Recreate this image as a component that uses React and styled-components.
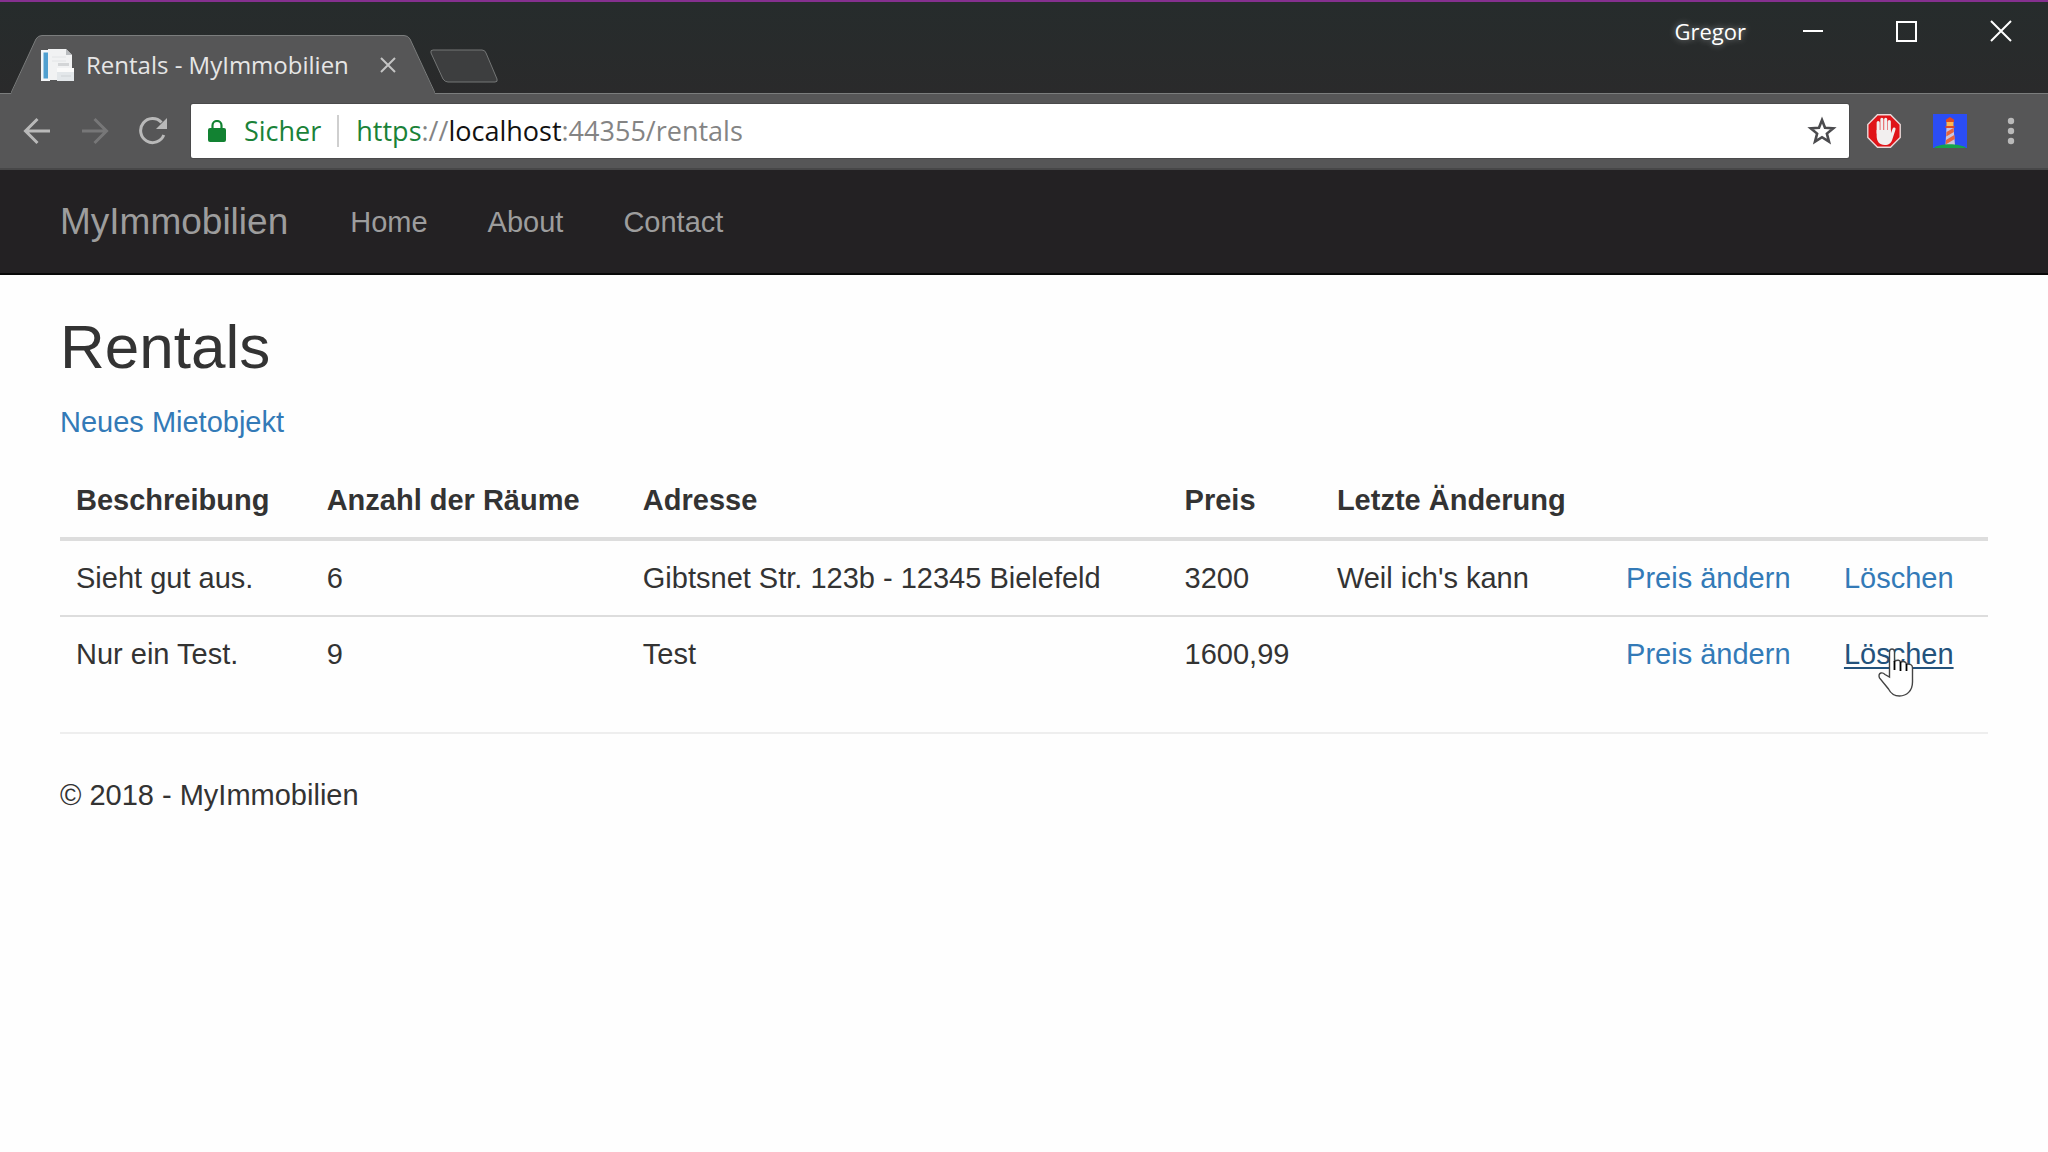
import React from "react";
import styled, { createGlobalStyle } from "styled-components";

const uiFont = `"Open Sans", "Noto Sans", sans-serif`;
const pageFont = `"Liberation Sans", Arial, sans-serif`;

const GlobalStyle = createGlobalStyle`
  * { box-sizing: border-box; }
  html { background: #fefefe; }
  body { margin: 0; font-family: ${pageFont}; font-size: 29px; line-height: 42px; color: #333; }
`;

const PlainButton = styled.button`
  display: flex;
  align-items: center;
  justify-content: center;
  flex: none;
  width: ${(p) => p.$width}px;
  height: ${(p) => p.$height}px;
  padding: 0;
  border: 0;
  background: none;
  color: #b9b9b9;
  svg { display: block; }
`;

const TitleBar = styled.header`
  display: flex;
  justify-content: space-between;
  align-items: flex-start;
  height: 94px;
  border-top: 2px solid #85308f;
  background: linear-gradient(#262c2c, #2a2a2b);
  box-shadow: inset 0 -1px #7b7d7d;
`;

const TabStrip = styled.nav`
  display: flex;
  padding-top: 33px;
`;

const Tab = styled.div`
  display: grid;
  width: 424px;
  height: 59px;
  margin-left: 11px;
  > * { grid-area: 1 / 1; }
`;

const TabContent = styled.div`
  display: flex;
  align-items: center;
  padding: 0 39px 0 29px;
`;

const TabTitle = styled.span`
  flex: 1;
  padding-left: 12px;
  font: 24px/34px ${uiFont};
  color: #e6e6e6;
  white-space: nowrap;
`;

const NewTab = styled(PlainButton)`
  margin: 14px 0 0 -6px;
`;

const WindowControls = styled.div`
  display: flex;
  align-items: center;
  height: 58px;
`;

const Profile = styled.span`
  padding-right: 20px;
  font: 22px/30px ${uiFont};
  color: #fff;
  text-shadow: 0 0 6px rgba(255, 255, 255, 0.5);
`;

const Toolbar = styled.div`
  display: flex;
  align-items: center;
  height: 76px;
  padding: 0 17px 0 8px;
  background: #565657;
  border-bottom: 2px solid #474748;
`;

const AddressBar = styled.div`
  display: flex;
  flex: 1;
  align-items: center;
  height: 54px;
  margin: 0 10px;
  padding: 0 12px 0 17px;
  border-radius: 2px;
  background: #fff;
  box-shadow: 0 0 0 1px #4a4a4b;
  font: 27px/36px ${uiFont};
  color: #848484;
`;

const Secure = styled.span`
  margin-left: 18px;
  padding-right: 16px;
  border-right: 2px solid #cfcfcf;
  line-height: 32px;
  color: #1a8238;
`;

const Url = styled.span`
  flex: 1;
  padding-left: 17px;
  em { font-style: normal; color: #1a8238; }
  b { font-weight: 400; color: #111; }
`;

const NavBar = styled.nav`
  display: flex;
  align-items: center;
  height: 105px;
  padding: 0 60px;
  background: #232123;
  border-bottom: 2px solid #080808;
`;

const Brand = styled.a`
  padding-right: 32px;
  font-size: 37px;
  color: #9d9d9d;
  text-decoration: none;
`;

const NavLink = styled.a`
  padding: 0 30px;
  color: #9d9d9d;
  text-decoration: none;
`;

const Main = styled.main`
  padding: 38px 60px 0;
`;

const Heading = styled.h2`
  margin: 0 0 20px;
  font-size: 62px;
  font-weight: 400;
  line-height: 68px;
`;

const Paragraph = styled.p`
  margin: 0 0 20px;
`;

const Link = styled.a`
  color: ${(p) => (p.$hovered ? "#23527c" : "#337ab7")};
  text-decoration: ${(p) => (p.$hovered ? "underline" : "none")};
  text-decoration-thickness: 2px;
  text-underline-offset: 3px;
`;

const Table = styled.table`
  width: 100%;
  margin-bottom: 41px;
  border-collapse: collapse;
  table-layout: fixed;
  white-space: nowrap;
  th, td { padding: 16px; text-align: left; }
  th { border-bottom: 4px solid #ddd; }
  tr + tr td { border-top: 2px solid #ddd; }
`;

const Col = styled.col`
  width: ${(p) => p.$share}%;
`;

const LinkWrap = styled.span`
  position: relative;
`;

const Cursor = styled.svg`
  position: absolute;
  left: 34px;
  top: 10px;
`;

const Rule = styled.hr`
  margin: 0 0 40px;
  border: 0;
  border-top: 2px solid #eee;
`;

const Favicon = () => (
  <svg width="34" height="34" viewBox="0 0 34 34">
    <path d="M1 2h9v31H1z" fill="#f4f6f8" />
    <path d="M3.500 4.500H9v26H3.500z" fill="#4f9fd0" />
    <path d="M8 1h18l6 6v25H8z" fill="#f1f2f3" />
    <path d="M26 1v6h6z" fill="#b9bcbf" />
    <path d="M12 9h14M12 13h14" stroke="#e2e4e6" />
    <path d="M18 15h11v3H18z" fill="#d3d5d7" />
    <path d="M17 20h17v13H17z" fill="#e3e7ea" />
    <path d="M17 20h17v4H17z" fill="#fafafa" />
    <path d="M21 28h10" stroke="#cfd3d6" />
  </svg>
);

const HandSign = () => (
  <svg width="34" height="34" viewBox="0 0 34 34">
    <path d="M10.500.8h13L33.200 10.500v13L23.500 33.200h-13L.8 23.500v-13z" fill="#e01419" stroke="#e8dada" strokeWidth="1.400" />
    <path d="M11.200 19V8.500M14.900 17V5.200M18.700 17V5.200M22.300 19V7.500" fill="none" stroke="#f2efef" strokeWidth="3.100" strokeLinecap="round" />
    <path d="M9.650 16h14.200v3.500l1.600-4.500q.8-2 2.600-1.200.8.600.4 2l-3 9.200c-1.200 4-3.500 6-7.700 6-5.500 0-8.100-4-8.100-9z" fill="#f2efef" />
  </svg>
);

const Lighthouse = () => (
  <svg width="34" height="34" viewBox="0 0 34 34">
    <path d="M0 0h34v34H0z" fill="#2b4df5" />
    <path d="M13.500 13h7l1.500 18h-9.500z" fill="#c9c4dd" />
    <path d="M13.500 18l7-4 .4 4-7.700 4.500zM13 26l8.300-5 .5 4-9.200 5.500z" fill="#e8643c" />
    <path d="M12.500 12h9v2h-9zM13 5.500L17 3l4 2.500V8h-8z" fill="#dd4a26" />
    <path d="M13.500 8h7v4h-7z" fill="#ffb84d" />
    <path d="M1 34c5-5 26-5 32 0z" fill="#16a34c" />
  </svg>
);

const rentals = [
  { id: 1, text: "Sieht gut aus.", rooms: "6", address: "Gibtsnet Str. 123b - 12345 Bielefeld", price: "3200", change: "Weil ich's kann" },
  { id: 2, text: "Nur ein Test.", rooms: "9", address: "Test", price: "1600,99", change: "", hovered: true },
];

const shares = [13, 16.4, 28.1, 7.9, 15, 11.3, 8.3];
const headings = ["Beschreibung", "Anzahl der Räume", "Adresse", "Preis", "Letzte Änderung"];

export default function App() {
  return (
    <>
      <GlobalStyle />
      <TitleBar>
        <TabStrip>
          <Tab>
            <svg width="424" height="59" viewBox="0 0 424 59">
              <path d="M0 59L25 4Q27 .5 31 .5H393Q397 .5 399 4L424 59z" fill="#565657" />
              <path d="M0 58L25 4Q27 .5 31 .5H393Q397 .5 399 4L424 58" fill="none" stroke="#7b7d7d" />
            </svg>
            <TabContent>
              <Favicon />
              <TabTitle>Rentals - MyImmobilien</TabTitle>
              <PlainButton $width={16} $height={20} aria-label="Tab schließen">
                <svg width="16" height="16" viewBox="0 0 16 16"><path d="M1 1l14 14M15 1L1 15" stroke="#c4c4c4" strokeWidth="2" /></svg>
              </PlainButton>
            </TabContent>
          </Tab>
          <NewTab $width={70} $height={34} aria-label="Neuer Tab">
            <svg width="70" height="34" viewBox="0 0 70 34"><path d="M4 1h49q3 0 4 3l11 26q1 3-2 3H19q-3 0-5-3L2 4q-1-3 2-3z" fill="#3d3e3f" stroke="#747676" /></svg>
          </NewTab>
        </TabStrip>
        <WindowControls>
          <Profile>Gregor</Profile>
          <PlainButton $width={94} $height={58} aria-label="Minimieren">
            <svg width="22" height="22"><path d="M1 11h20" stroke="#fff" strokeWidth="2" /></svg>
          </PlainButton>
          <PlainButton $width={94} $height={58} aria-label="Maximieren">
            <svg width="22" height="22"><path d="M1 2h19v19H1z" fill="none" stroke="#fff" strokeWidth="2" /></svg>
          </PlainButton>
          <PlainButton $width={94} $height={58} aria-label="Schließen">
            <svg width="22" height="22"><path d="M1 1l20 20M21 1L1 21" stroke="#fff" strokeWidth="2" /></svg>
          </PlainButton>
        </WindowControls>
      </TitleBar>
      <Toolbar>
        <PlainButton $width={58} $height={54} aria-label="Zurück">
          <svg width="28" height="28" viewBox="0 0 28 28"><path d="M27 14H3M14.500 2L2.500 14l12 12" fill="none" stroke="#b9b9b9" strokeWidth="3" /></svg>
        </PlainButton>
        <PlainButton $width={58} $height={54} aria-label="Vorwärts">
          <svg width="28" height="28" viewBox="0 0 28 28"><path d="M1 14h24M13.500 2l12 12-12 12" fill="none" stroke="#777778" strokeWidth="3" /></svg>
        </PlainButton>
        <PlainButton $width={57} $height={54} aria-label="Neu laden">
          <svg width="28" height="28" viewBox="0 0 28 28"><path d="M24.800 18A12 12 0 1 1 22.500 5.500" fill="none" stroke="#b9b9b9" strokeWidth="3" /><path d="M28 1v11H17z" fill="#b9b9b9" /></svg>
        </PlainButton>
        <AddressBar>
          <svg width="18" height="22" viewBox="0 0 18 22"><path d="M4.500 9V5.500a4.500 4.500 0 0 1 9 0V9" fill="none" stroke="#128232" strokeWidth="2.200" /><rect y="8" width="18" height="14" rx="2" fill="#128232" /></svg>
          <Secure>Sicher</Secure>
          <Url><em>https</em>://<b>localhost</b>:44355/rentals</Url>
          <PlainButton $width={30} $height={40} aria-label="Lesezeichen">
            <svg width="30" height="30" viewBox="0 0 30 30"><path d="M15 4l3 7.700 8.300.6-6.400 5.300 2.100 8.100L15 21.200l-7 4.500 2.100-8.100-6.400-5.300 8.300-.6z" fill="none" stroke="#4b4b4e" strokeWidth="2.600" /></svg>
          </PlainButton>
        </AddressBar>
        <PlainButton $width={50} $height={54} aria-label="Werbeblocker"><HandSign /></PlainButton>
        <PlainButton $width={82} $height={54} aria-label="Lighthouse"><Lighthouse /></PlainButton>
        <PlainButton $width={40} $height={54} aria-label="Menü">
          <svg width="8" height="28" viewBox="0 0 8 28"><g fill="#b9b9b9"><circle cx="4" cy="4" r="3.200" /><circle cx="4" cy="14" r="3.200" /><circle cx="4" cy="24" r="3.200" /></g></svg>
        </PlainButton>
      </Toolbar>
      <NavBar>
        <Brand href="#">MyImmobilien</Brand>
        <NavLink href="#home">Home</NavLink>
        <NavLink href="#about">About</NavLink>
        <NavLink href="#contact">Contact</NavLink>
      </NavBar>
      <Main>
        <Heading>Rentals</Heading>
        <Paragraph><Link href="#new">Neues Mietobjekt</Link></Paragraph>
        <Table>
          <colgroup>{shares.map((s, i) => <Col key={i} $share={s} />)}</colgroup>
          <thead>
            <tr>
              {headings.map((h) => <th key={h}>{h}</th>)}
              <th />
              <th />
            </tr>
          </thead>
          <tbody>
            {rentals.map((r) => (
              <tr key={r.id}>
                <td>{r.text}</td>
                <td>{r.rooms}</td>
                <td>{r.address}</td>
                <td>{r.price}</td>
                <td>{r.change}</td>
                <td><Link href="#price">Preis ändern</Link></td>
                <td>
                  <LinkWrap>
                    <Link href="#delete" $hovered={r.hovered}>Löschen</Link>
                    {r.hovered && (
                      <Cursor width="36" height="50" viewBox="0 0 36 50">
                        <path d="M11.500 29V4q0-3 2.500-3t2.500 3v9q5-2 6 1 5-1.500 6 2 6-.5 6 4v14c0 9-6 14-13 14-6 0-9-3-11-7L1.500 30q-1.500-4 1.500-5 2-.5 4 1.500z" fill="#fff" stroke="#444" strokeWidth="1.400" />
                        <path d="M16.500 13v9M22.500 14v9M28.500 16v7" stroke="#000" strokeWidth="1.800" />
                      </Cursor>
                    )}
                  </LinkWrap>
                </td>
              </tr>
            ))}
          </tbody>
        </Table>
        <Rule />
        <footer><Paragraph>© 2018 - MyImmobilien</Paragraph></footer>
      </Main>
    </>
  );
}
